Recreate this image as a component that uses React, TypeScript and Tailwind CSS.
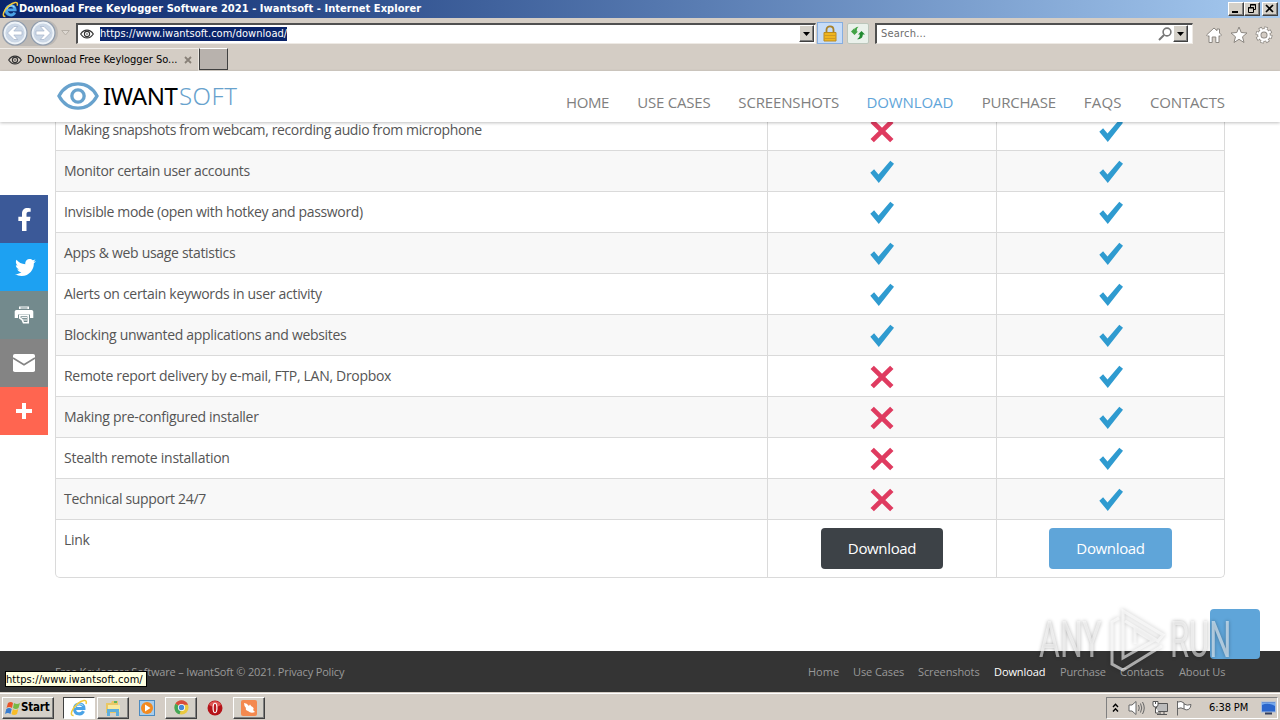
import React from 'react';
import { FaFacebookF, FaTwitter } from 'react-icons/fa';

type Row = { label: string; free: boolean; tracking: string };

const rows: Row[] = [
  { label: 'Making snapshots from webcam, recording audio from microphone', free: false, tracking: 'tracking-[-0.38px]' },
  { label: 'Monitor certain user accounts', free: true, tracking: 'tracking-[-0.34px]' },
  { label: 'Invisible mode (open with hotkey and password)', free: true, tracking: 'tracking-[-0.35px]' },
  { label: 'Apps & web usage statistics', free: true, tracking: 'tracking-[-0.31px]' },
  { label: 'Alerts on certain keywords in user activity', free: true, tracking: 'tracking-[-0.3px]' },
  { label: 'Blocking unwanted applications and websites', free: true, tracking: 'tracking-[-0.31px]' },
  { label: 'Remote report delivery by e-mail, FTP, LAN, Dropbox', free: false, tracking: 'tracking-[-0.3px]' },
  { label: 'Making pre-configured installer', free: false, tracking: 'tracking-[-0.3px]' },
  { label: 'Stealth remote installation', free: false, tracking: 'tracking-[-0.25px]' },
  { label: 'Technical support 24/7', free: false, tracking: 'tracking-[-0.32px]' },
];

const navItems = [
  { label: 'HOME', style: 'w-[43px] tracking-[-0.4px]' },
  { label: 'USE CASES', style: 'w-[73px] tracking-[-0.2px]' },
  { label: 'SCREENSHOTS', style: 'w-[100px] tracking-[-0.15px]' },
  { label: 'DOWNLOAD', style: 'w-[87px] tracking-[-0.1px]' },
  { label: 'PURCHASE', style: 'w-[74px] tracking-[-0.2px]' },
  { label: 'FAQS', style: 'w-[38px] tracking-[0.2px]' },
  { label: 'CONTACTS', style: 'w-[75px] tracking-[-0.15px]' },
];

const footerItems = [
  { label: 'Home', style: 'w-[30px]' },
  { label: 'Use Cases', style: 'w-[50px] tracking-[-0.1px]' },
  { label: 'Screenshots', style: 'w-[61px] tracking-[-0.1px]' },
  { label: 'Download', style: 'w-[51px] tracking-[-0.1px]' },
  { label: 'Purchase', style: 'w-[45px] tracking-[-0.2px]' },
  { label: 'Contacts', style: 'w-[44px] tracking-[-0.1px]' },
  { label: 'About Us', style: 'w-[46px] tracking-[-0.1px]' },
];

const raised = 'border border-t-white border-l-white border-r-[#404040] border-b-[#404040] shadow-[inset_-1px_-1px_0_#808080] bg-[#d4d0c8]';
const siteFont = "font-['Open_Sans','Noto_Sans',sans-serif]";
const uiFont = "font-['DejaVu_Sans_Condensed','DejaVu_Sans',sans-serif]";

const IeLogo = ({ size }: { size: number }) => (
  <svg width={size} height={size} viewBox="0 0 20 20" fill="none" className="shrink-0">
    <path d="M5.5 10.5H15.5C15.5 3.6 5 3.8 5 11C5 17.4 13 18.2 15 13.5" stroke="#4ba3e6" strokeWidth="3.4" />
    <path d="M5.7 9.8C6.2 5.8 12 4 14.7 7.5" stroke="#a5defb" strokeWidth="1.2" />
    <path d="M4 18.3C-1 18.8 2.2 10.5 8.2 5.4C13 1.4 19.8-.6 17.8 5.6" stroke="#f3c93b" strokeWidth="1.7" />
  </svg>
);

const EyeIcon = () => (
  <svg width="14" height="10" viewBox="0 0 14 10" fill="none" className="shrink-0">
    <path d="M.7 5C4-.2 10-.2 13.3 5C10 10.2 4 10.2.7 5Z" stroke="#333" strokeWidth="1.2" />
    <circle cx="7" cy="5" r="2.6" stroke="#333" strokeWidth="1.1" />
    <circle cx="7" cy="5" r=".8" fill="#333" />
  </svg>
);

const ArrowCircle = ({ back }: { back?: boolean }) => (
  <svg width="26" height="26" viewBox="0 0 26 26" fill="none" className={back ? '' : 'rotate-180'}>
    <circle cx="13" cy="13" r="12" fill="#eef3f8" stroke="#8f9cad" strokeWidth="1.2" />
    <circle cx="13" cy="13" r="9.6" fill="#cbd7e6" />
    <path d="M5.5 13L12 6.5H15.7L11.8 11H20V15H11.8L15.7 19.5H12Z" fill="#fff" stroke="#a3b2c8" strokeWidth=".7" />
  </svg>
);

const DropButton = () => (
  <div className={`flex h-[17px] w-[15px] items-center justify-center ${raised}`}>
    <svg width="7" height="4" viewBox="0 0 7 4"><path d="M0 0H7L3.5 4Z" fill="#000" /></svg>
  </div>
);

const Check = () => (
  <svg width="24" height="24" viewBox="0 0 24 24" className="mt-px">
    <path d="M.3 12.8L4.1 9.3L8.5 14.5L20.3.8L24 3.8L8.8 23Z" fill="#2f9bd0" />
  </svg>
);

const Cross = () => (
  <svg width="24" height="24" viewBox="0 0 24 24" className="mt-px">
    <path d="M2.2 2.4L21.8 21.6M21.8 2.4L2.2 21.6" stroke="#df3b60" strokeWidth="4.8" />
  </svg>
);

const TitleBar = () => (
  <div className="flex h-[18px] shrink-0 items-center bg-linear-to-r from-[#0a246a] to-[#a6caf0] pl-[2px] pr-[2px]">
    <IeLogo size={17} />
    <span className={`pt-px text-[11px] font-bold whitespace-nowrap text-white tracking-[0.05px] ${uiFont}`}>
      Download Free Keylogger Software 2021 - Iwantsoft - Internet Explorer
    </span>
    <div className="ml-auto flex items-center">
      <div className={`h-[14px] w-[16px] ${raised}`}>
        <svg width="14" height="12" viewBox="0 0 14 12"><path d="M3 8H9V10H3Z" /></svg>
      </div>
      <div className={`h-[14px] w-[16px] ${raised}`}>
        <svg width="14" height="12" viewBox="0 0 14 12" fill="none" stroke="#000">
          <path d="M5.5 4V1.5H10.5V6.5H8M5 2H11M3.5 4.5H8.5V9.5H3.5ZM3 5H9" />
        </svg>
      </div>
      <div className={`ml-[2px] h-[14px] w-[16px] ${raised}`}>
        <svg width="14" height="12" viewBox="0 0 14 12"><path d="M3 2L10 9M10 2L3 9" stroke="#000" strokeWidth="1.7" /></svg>
      </div>
    </div>
  </div>
);

const AddressBar = () => (
  <div className="flex h-[30px] shrink-0 items-center bg-[#d4cdc5] pl-[2px]">
    <div className="flex h-[26px] w-[56px] items-center gap-[2px] rounded-full bg-[#bdb9b5]">
      <ArrowCircle back />
      <ArrowCircle />
    </div>
    <svg width="9" height="6" viewBox="0 0 9 6" className="ml-[3px]"><path d="M.7.5H8.3L4.5 5Z" fill="#ddd8d2" stroke="#b5afa7" /></svg>
    <div className="ml-[6px] flex h-[21px] w-[740px] items-center border border-t-2 border-l-2 border-[#eeeae5] border-t-[#505050] border-l-[#505050] bg-white pl-[2px] pr-[1px]">
      <EyeIcon />
      <span className={`ml-[6px] bg-[#0a246a] text-[11px] leading-[14px] whitespace-nowrap text-white tracking-[0.03px] ${uiFont}`}>https://www.iwantsoft.com/download/</span>
      <div className="ml-auto"><DropButton /></div>
    </div>
    <div className="ml-[1px] flex h-[22px] w-[26px] items-center justify-center border border-[#86aee0] bg-[#c6dcf8]">
      <svg width="14" height="17" viewBox="0 0 14 17">
        <path d="M3.5 8V4.8C3.5.2 10.5.2 10.5 4.8V8" fill="none" stroke="#a88129" strokeWidth="1.8" />
        <path d="M1 7.5H13V16H1Z" fill="#efb51f" stroke="#b98a20" />
        <path d="M1 10.5H13M1 13.5H13" stroke="#cf9a25" />
      </svg>
    </div>
    <div className="ml-[4px] flex h-[21px] w-[22px] items-center justify-center rounded-[2px] border border-[#bcc6bb] bg-[#eaf1eb]">
      <svg width="16" height="16" viewBox="0 0 16 16">
        <path d="M1 6.5L4.5 3V5.2C4.7 3.3 6 2 8.5 1.8C7 3 6.8 4 6.8 6.5H8L4.5 10Z" fill="#42a345" />
        <path d="M15 9.5L11.5 6L8 9.5H9.8C9.8 12 9 13 7 14.2C11 14.2 12.8 12.7 12.8 9.5Z" fill="#218a31" />
      </svg>
    </div>
    <div className="ml-[6px] flex h-[21px] w-[318px] items-center border border-t-2 border-l-2 border-[#eeeae5] border-t-[#505050] border-l-[#505050] bg-white pl-[3px] pr-[4px]">
      <span className={`pt-[2px] pl-px text-[11px] text-[#6d6d6d] tracking-[0.2px] ${uiFont}`}>Search...</span>
      <svg width="14" height="14" viewBox="0 0 14 14" fill="none" className="ml-auto mr-[1px]">
        <circle cx="9" cy="5" r="3.9" stroke="#777" strokeWidth="1.6" />
        <path d="M6 8L1 13" stroke="#777" strokeWidth="2" />
      </svg>
      <DropButton />
    </div>
    <div className="ml-auto mr-[7px] flex items-center gap-[7px] pt-1">
      <svg width="18" height="18" viewBox="0 0 18 18"><path d="M1.5 9L9 2L12 4.7V3H14.5V7L16.5 9L15 10.5L14 9.7V16.5H10.8V11H7.2V16.5H4V9.7L3 10.5Z" fill="#fff" stroke="#8b8680" /></svg>
      <svg width="18" height="18" viewBox="0 0 18 18"><path d="M9 1L11.2 6.5L17 7L12.5 10.8L14 16.5L9 13.3L4 16.5L5.5 10.8L1 7L6.8 6.5Z" fill="#fff" stroke="#8b8680" /></svg>
      <svg width="18" height="18" viewBox="0 0 18 18" fill="none">
        <circle cx="9" cy="9" r="6.8" stroke="#8b8680" strokeWidth="3.4" strokeDasharray="3.3 2.04" />
        <circle cx="9" cy="9" r="4.7" stroke="#8b8680" strokeWidth="4.2" />
        <circle cx="9" cy="9" r="6.6" stroke="#fff" strokeWidth="2.2" strokeDasharray="2.3 2.88" strokeDashoffset="-.5" />
        <circle cx="9" cy="9" r="4.7" stroke="#fff" strokeWidth="2.4" />
      </svg>
    </div>
  </div>
);

const TabRow = () => (
  <div className="flex h-[23px] shrink-0 items-end bg-[#d4cdc5]">
    <div className="flex h-[23px] w-[199px] items-center border-t border-r border-t-[#f0ece8] border-r-[#ece8e2] pl-[8px]">
      <EyeIcon />
      <span className={`ml-[5px] pt-px text-[11px] whitespace-nowrap text-black ${uiFont}`}>Download Free Keylogger So...</span>
      <svg width="8" height="8" viewBox="0 0 8 8" className="ml-auto mr-[6px]"><path d="M1 1L7 7M7 1L1 7" stroke="#888078" strokeWidth="1.8" /></svg>
    </div>
    <div className="mb-[1px] h-[22px] w-[29px] border border-t-white border-l-[#404040] border-r-[#404040] border-b-[#404040] bg-[#b8b2ad]" />
  </div>
);

const SiteHeader = () => (
  <header className={`relative z-10 flex h-[51px] shrink-0 bg-white pl-[57px] pr-[55px] shadow-[0_1px_3px_rgba(0,0,0,0.25)] ${siteFont}`}>
    <svg width="42" height="30" viewBox="0 0 43 30" fill="none" className="mt-[10px]">
      <path d="M2 15C11-1.5 32-1.5 41 15C32 31.5 11 31.5 2 15Z" stroke="#68a2cd" strokeWidth="3.4" />
      <circle cx="21.5" cy="15" r="6.3" stroke="#68a2cd" strokeWidth="3.4" />
    </svg>
    <div className="mt-[8px] ml-[4px] flex font-['Noto_Sans',sans-serif] text-[24px] leading-[34px]">
      <span className="w-[76px] text-black tracking-[-0.4px]">IWANT</span>
      <span className="font-light text-[#68a2cd] tracking-[0.5px]">SOFT</span>
    </div>
    <nav className="ml-auto flex w-[659px] justify-between pt-[19px] text-[15px] leading-[24px] text-[#808080]">
      {navItems.map((item) => (
        <a key={item.label} className={`whitespace-nowrap ${item.style} ${item.label === 'DOWNLOAD' ? 'text-[#5fa5d9]' : ''}`}>{item.label}</a>
      ))}
    </nav>
  </header>
);

const FeatureTable = () => (
  <div className={`mx-[55px] -mt-[12px] w-[1170px] rounded-b-[5px] border border-t-0 border-[#dadada] text-[14px] text-[#555] ${siteFont}`}>
    {rows.map((row, i) => (
      <div key={row.label} className={`grid h-[41px] grid-cols-[711px_230px_227px] border-b border-[#dadada] ${i % 2 ? 'bg-[#f8f8f8]' : 'bg-white'}`}>
        <div className={`pl-2 leading-[40px] whitespace-nowrap ${row.tracking}`}>{row.label}</div>
        <div className="flex items-center justify-center border-x border-[#dadada]">{row.free ? <Check /> : <Cross />}</div>
        <div className="flex items-center justify-center"><Check /></div>
      </div>
    ))}
    <div className="grid h-[57px] grid-cols-[711px_230px_227px]">
      <div className="pl-2 leading-[40px] tracking-[-0.3px]">Link</div>
      <div className="flex items-center justify-center border-x border-[#dadada]">
        <button className="h-[41px] w-[122px] rounded-[4px] bg-[#3d4247] text-[15px] text-white tracking-[-0.35px]">Download</button>
      </div>
      <div className="flex items-center justify-center">
        <button className="h-[41px] w-[123px] rounded-[4px] bg-[#5fa5d9] text-[15px] text-white tracking-[-0.35px]">Download</button>
      </div>
    </div>
  </div>
);

const ShareBar = () => (
  <div className="absolute top-[124px] left-0 z-20 text-white *:flex *:h-12 *:w-12 *:items-center *:justify-center">
    <div className="bg-[#3b5998]"><FaFacebookF size={23} /></div>
    <div className="bg-[#1da1f2] pl-[2px]"><FaTwitter size={21} /></div>
    <div className="bg-[#738a8d]">
      <svg width="20" height="20" viewBox="0 0 20 20">
        <path d="M5 1.5H15V4H5ZM2.5 5H17.5C19 5 19.3 6 19.3 7V13H16V9.5H4V13H.7V7C.7 6 1 5 2.5 5Z" fill="#fff" />
        <path d="M5.8 10.5H14.2V17.8H9.5L8 14.5L5.8 13Z" fill="none" stroke="#fff" strokeWidth="1.6" />
        <path d="M7.5 12.6H13M9 15H13" stroke="#fff" strokeWidth="1" />
        <path d="M6.5 3H13.5" stroke="#738a8d" />
      </svg>
    </div>
    <div className="bg-[#848484]">
      <svg width="22" height="18" viewBox="0 0 22 18"><rect width="22" height="18" rx="1.8" fill="#fff" /><path d="M0 4L11 10.7L22 4" fill="none" stroke="#848484" strokeWidth="1.6" /></svg>
    </div>
    <div className="bg-[#ff6550]">
      <svg width="16" height="16" viewBox="0 0 16 16"><path d="M8 0V16M0 8H16" stroke="#fff" strokeWidth="4" /></svg>
    </div>
  </div>
);

const Watermark = () => (
  <div className="absolute right-[48px] bottom-[19px] z-30 flex h-[66px] w-[193px] items-center font-['Roboto',sans-serif] text-[50px] leading-none text-white/55 [text-shadow:0_0_5px_rgba(0,0,0,0.3)]">
    <span className="w-[70px] origin-left scale-x-[0.64]">ANY</span>
    <svg width="58" height="66" viewBox="0 0 58 66" fill="none" className="shrink-0 drop-shadow-[0_0_2px_rgba(0,0,0,0.35)]">
      <path d="M10 11L3 15V57L14 63L53 39M14 42V4L54 28L49 34L16 14M14 42V51L44 34L26 23V37" stroke="#fff" strokeOpacity=".6" strokeWidth="3" />
    </svg>
    <span className="ml-[3px] origin-left scale-x-[0.62]">RUN</span>
  </div>
);

const SiteFooter = () => (
  <footer className={`flex h-[41px] shrink-0 items-center justify-between bg-[#343434] px-[55px] pt-[2px] text-[11px] text-[#999] ${siteFont}`}>
    <span className="tracking-[-0.16px]">Free Keylogger Software – IwantSoft © 2021. Privacy Policy</span>
    <div className="flex w-[417px] justify-between">
      {footerItems.map((item) => (
        <a key={item.label} className={`whitespace-nowrap ${item.style} ${item.label === 'Download' ? 'font-medium text-white' : ''}`}>{item.label}</a>
      ))}
    </div>
  </footer>
);

const Taskbar = () => (
  <div className={`flex h-[28px] shrink-0 items-center border-t border-[#d4cdc5] bg-[#d4cdc5] pl-[2px] shadow-[inset_0_1px_0_#fff] ${uiFont}`}>
    <div className={`mt-[2px] flex h-[22px] w-[52px] items-center pl-[2px] ${raised}`}>
      <svg width="16" height="16" viewBox="0 0 16 16" className="shrink-0">
        <path d="M3 3Q6 1 8 3L7 8Q4 6 1.5 8Z" fill="#e95428" />
        <path d="M9 3Q12 5 15 3L13.5 8Q11 10 8 8Z" fill="#77b943" />
        <path d="M1.3 9Q4 7 6.7 9L5.4 14Q3 12 0 14Z" fill="#387dd0" />
        <path d="M8 9Q10 11 13.3 9L12 14Q9 16 6.5 14Z" fill="#f8bd28" />
      </svg>
      <span className="text-[11.5px] font-bold tracking-[-0.2px] text-black">Start</span>
    </div>
    <div className="mt-[2px] ml-[9px] flex h-[22px] w-[32px] items-center justify-center border border-white border-t-[#404040] border-l-[#404040] bg-white"><IeLogo size={18} /></div>
    <div className={`mt-[2px] ml-[2px] flex h-[22px] w-[32px] items-center justify-center ${raised}`}>
      <svg width="16" height="16" viewBox="0 0 16 16">
        <path d="M1 3H6L7 1H13V13H1Z" fill="#e9c765" /><path d="M3 5H15V12H3Z" fill="#f8e99e" />
        <path d="M2 16V9H14V16H11V12H5V16Z" fill="#5eaedb" /><path d="M9 2H12" stroke="#63b357" strokeWidth="2" />
      </svg>
    </div>
    <svg width="16" height="16" viewBox="0 0 16 16" className="mt-[2px] ml-[10px]">
      <rect x=".5" y=".5" width="15" height="15" fill="#a8cdec" stroke="#4c8bc1" /><circle cx="8" cy="8" r="6" fill="#f38a20" /><path d="M6 4.5L11.5 8L6 11.5Z" fill="#fff" />
    </svg>
    <div className={`mt-[2px] ml-[10px] flex h-[22px] w-[32px] items-center justify-center ${raised}`}>
      <svg width="15" height="15" viewBox="0 0 16 16">
        <circle cx="8" cy="8" r="7.5" fill="#eac940" /><path d="M8 8L1.5 4C4-1.5 13-1 15 5H8Z" fill="#d94b3d" /><path d="M8 8L6 15.3C1 14.5-1 8 1.5 4Z" fill="#42a657" />
        <circle cx="8" cy="8" r="3.8" fill="#fff" /><circle cx="8" cy="8" r="2.9" fill="#4788d8" />
      </svg>
    </div>
    <svg width="16" height="16" viewBox="0 0 16 16" className="mt-[2px] ml-[10px]">
      <circle cx="8" cy="8" r="7.5" fill="#b51319" /><path d="M2 5C4 0 12 0 14 5Q8 9 2 5" fill="#df5855" /><ellipse cx="8" cy="8" rx="2.5" ry="5.2" fill="#fff" /><ellipse cx="8" cy="8" rx="1.3" ry="4.3" fill="#bd171d" />
    </svg>
    <div className={`mt-[2px] ml-[10px] flex h-[22px] w-[32px] items-center justify-center ${raised}`}>
      <svg width="16" height="16" viewBox="0 0 16 16"><rect width="16" height="16" rx="2" fill="#f4894f" /><path d="M3 3Q6 3 8 6Q9 3 10 6Q14 8 12 10L14 12Q10 14 7 11Q4 10 5 8Q3 6 3 3Z" fill="#fff" /></svg>
    </div>
    <div className="mt-[2px] mr-[2px] ml-auto flex h-[22px] w-[172px] items-center border border-white border-t-[#808080] border-l-[#808080] pl-[5px]">
      <svg width="7" height="10" viewBox="0 0 7 10" fill="none" stroke="#000" strokeWidth="1.4"><path d="M1 4L3.5 1.3L6 4M1 8.5L3.5 5.8L6 8.5" /></svg>
      <svg width="17" height="16" viewBox="0 0 17 16" fill="none" className="ml-[9px]" stroke="#666">
        <path d="M1 5H4L8 1.5V14.5L4 11H1Z" fill="#fff" /><path d="M10.5 5Q12 8 10.5 11M12.5 3.5Q15 8 12.5 12.5M14.5 2Q18 8 14.5 14" />
      </svg>
      <svg width="16" height="16" viewBox="0 0 16 16" fill="none" className="ml-[7px]" stroke="#555">
        <path d="M4.5 3.5H15.5V11.5H4.5ZM8 12V14.5M12 12V14.5M5 14.5H15" fill="#bbb" /><path d="M1 1.5H6V5Q6 7 3.5 7Q1 7 1 5ZM3.5 7V13H7M3.5 1V4" fill="#fff" />
      </svg>
      <svg width="16" height="16" viewBox="0 0 16 16" className="ml-[8px]" stroke="#666"><path d="M1.5 1V15.5M2 2Q5 .5 8 3V9Q5 7 2 8.5M8 4Q11 6 15 4.5Q15 7.5 12.5 9.5Q10 10.5 8 9" fill="#fff" /></svg>
      <span className="ml-[17px] pt-px text-[11px] tracking-[-0.1px] whitespace-nowrap text-black">6:38 PM</span>
      <svg width="15" height="14" viewBox="0 0 15 14" className="ml-auto mr-[1px]"><rect x=".5" y="1" width="14" height="10" fill="#2b66cc" stroke="#a6bde0" /><path d="M1 4Q7 1 14 5V2H1Z" fill="#76a9ec" /><path d="M4 12.5H11" stroke="#343f5d" strokeWidth="2" /></svg>
    </div>
  </div>
);

export default function App() {
  return (
    <div className="flex h-[720px] w-[1280px] flex-col overflow-hidden bg-white">
      <TitleBar />
      <AddressBar />
      <TabRow />
      <main className="relative flex min-h-0 flex-1 flex-col">
        <SiteHeader />
        <div className="min-h-0 flex-1"><FeatureTable /></div>
        <SiteFooter />
        <ShareBar />
        <div className="absolute right-[20px] bottom-[33px] h-[50px] w-[50px] rounded-[4px] bg-[#5fa5d9]" />
        <Watermark />
        <div className={`absolute bottom-[5px] left-[5px] z-30 h-[16px] w-[142px] border border-black bg-[#ffffe1] text-[11px] leading-[15px] whitespace-nowrap text-black tracking-[0.07px] ${uiFont}`}>https://www.iwantsoft.com/</div>
      </main>
      <Taskbar />
    </div>
  );
}
